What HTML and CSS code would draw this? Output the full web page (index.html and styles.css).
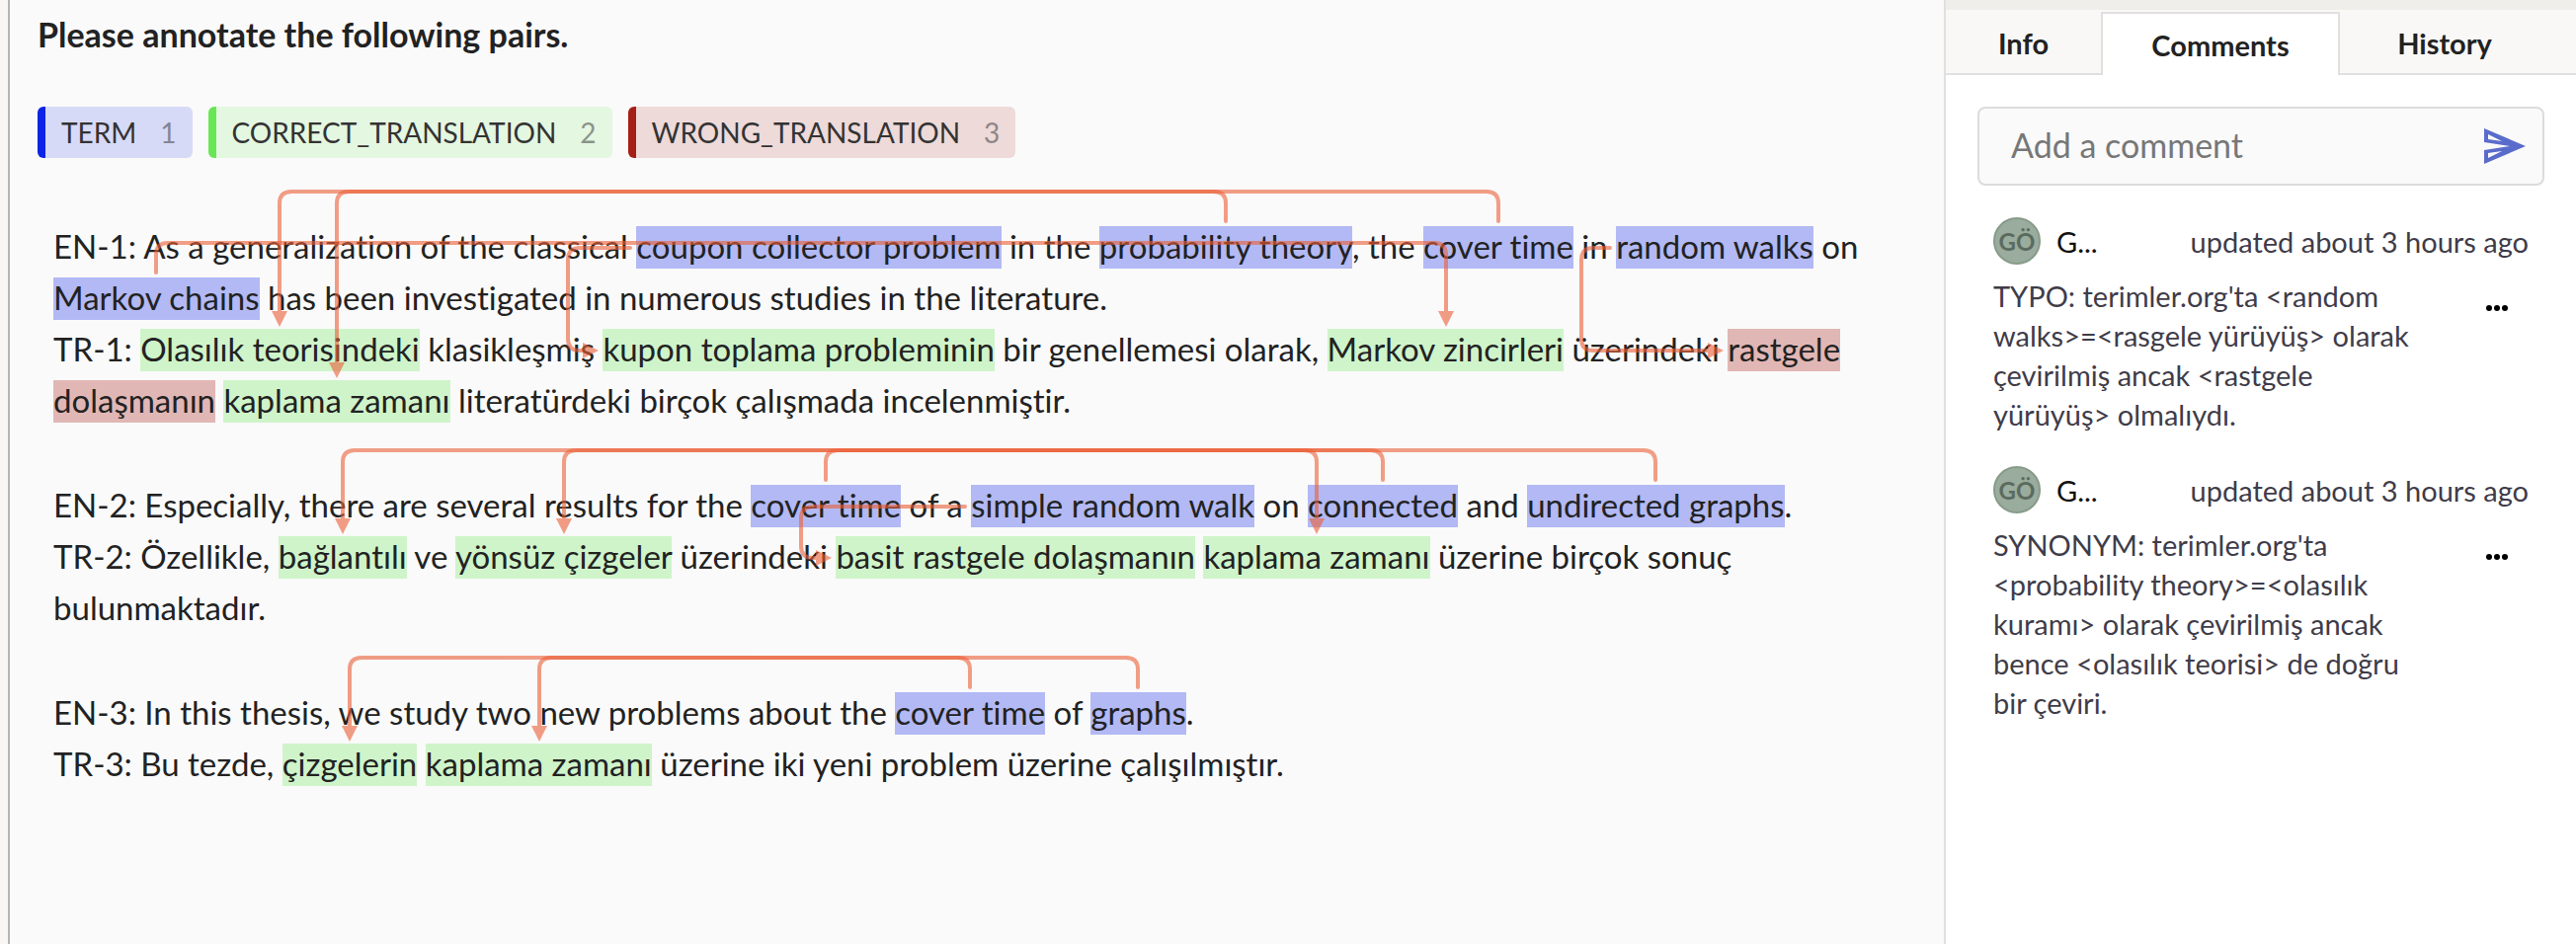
FILE: index.html
```
<!DOCTYPE html>
<html lang="en">
<head>
<meta charset="utf-8">
<title>Annotation</title>
<link rel="stylesheet" href="styles.css">
</head>
<body>
<div class="app">
  <main class="main">
    <h1 class="title">Please annotate the following pairs.</h1>
    <div class="labels">
      <button type="button" class="label label-term">TERM <span class="key">1</span></button>
      <button type="button" class="label label-correct">CORRECT_TRANSLATION <span class="key">2</span></button>
      <button type="button" class="label label-wrong">WRONG_TRANSLATION <span class="key">3</span></button>
    </div>
    <div class="text" id="text">
      <div class="pair">
        <p>EN-1: As a generalization of the classical <mark class="term" id="t1">coupon collector problem</mark> in the <mark class="term" id="t2">probability theory</mark>, the <mark class="term" id="t3">cover time</mark> in <mark class="term" id="t4">random walks</mark> on <mark class="term" id="t5">Markov chains</mark> has been investigated in numerous studies in the literature.</p>
        <p lang="tr">TR-1: <mark class="correct" id="c1">Olasılık teorisindeki</mark> klasikleşmiş <mark class="correct" id="c2">kupon toplama probleminin</mark> bir genellemesi olarak, <mark class="correct" id="c3">Markov zincirleri</mark> üzerindeki <mark class="wrong" id="w1">rastgele dolaşmanın</mark> <mark class="correct" id="c4">kaplama zamanı</mark> literatürdeki birçok çalışmada incelenmiştir.</p>
      </div>
      <div class="pair">
        <p>EN-2: Especially, there are several results for the <mark class="term" id="t6">cover time</mark> of a <mark class="term" id="t7">simple random walk</mark> on <mark class="term" id="t8">connected</mark> and <mark class="term" id="t9">undirected graphs</mark>.</p>
        <p lang="tr">TR-2: Özellikle, <mark class="correct" id="c5">bağlantılı</mark> ve <mark class="correct" id="c6">yönsüz çizgeler</mark> üzerindeki <mark class="correct" id="c7">basit rastgele dolaşmanın</mark> <mark class="correct" id="c8">kaplama zamanı</mark> üzerine birçok sonuç bulunmaktadır.</p>
      </div>
      <div class="pair">
        <p>EN-3: In this thesis, we study two new problems about the <mark class="term" id="t10">cover time</mark> of <mark class="term" id="t11">graphs</mark>.</p>
        <p lang="tr">TR-3: Bu tezde, <mark class="correct" id="c9">çizgelerin</mark> <mark class="correct" id="c10">kaplama zamanı</mark> üzerine iki yeni problem üzerine çalışılmıştır.</p>
      </div>
      <svg class="relations" id="relations" aria-hidden="true"></svg>
    </div>
  </main>
  <aside class="side">
    <nav class="tabs">
      <button type="button" class="tab">Info</button>
      <button type="button" class="tab active">Comments</button>
      <button type="button" class="tab">History</button>
    </nav>
    <div class="panel">
      <form class="composer">
        <input type="text" class="field" aria-label="Add a comment" placeholder="Add a comment">
        <button type="button" class="send" aria-label="Send">
          <svg width="42" height="36" viewBox="0 0 42 36"><path fill="#5a6ccb" fill-rule="evenodd" d="M0 0 42 18 0 36V22L26 18 0 14ZM4 6V11L18 13ZM4 30V25L18 23Z"/></svg>
        </button>
      </form>
      <article class="comment">
        <header class="head">
          <span class="avatar">GÖ</span>
          <span class="name">G...</span>
          <time class="when">updated about 3 hours ago</time>
        </header>
        <div class="body">
          <p class="message" lang="tr">TYPO: terimler.org'ta &lt;random walks&gt;=&lt;rasgele yürüyüş&gt; olarak çevirilmiş ancak &lt;rastgele yürüyüş&gt; olmalıydı.</p>
          <button type="button" class="more" aria-label="More"><svg width="24" height="8" viewBox="0 0 24 8"><circle cx="4" cy="4" r="3"/><circle cx="12" cy="4" r="3"/><circle cx="20" cy="4" r="3"/></svg></button>
        </div>
      </article>
      <article class="comment">
        <header class="head">
          <span class="avatar">GÖ</span>
          <span class="name">G...</span>
          <time class="when">updated about 3 hours ago</time>
        </header>
        <div class="body">
          <p class="message" lang="tr">SYNONYM: terimler.org'ta &lt;probability theory&gt;=&lt;olasılık kuramı&gt; olarak çevirilmiş ancak bence &lt;olasılık teorisi&gt; de doğru bir çeviri.</p>
          <button type="button" class="more" aria-label="More"><svg width="24" height="8" viewBox="0 0 24 8"><circle cx="4" cy="4" r="3"/><circle cx="12" cy="4" r="3"/><circle cx="20" cy="4" r="3"/></svg></button>
        </div>
      </article>
    </div>
  </aside>
</div>
<script src="relations.js"></script>
</body>
</html>
```
FILE: styles.css
```
* { box-sizing: border-box; }
body { margin: 0; font-family: Lato, "Open Sans", sans-serif; font-variant-ligatures: none; color: #222; background: #f8f7f5; }
p, h1 { margin: 0; }
button { font: inherit; font-variant-ligatures: none; border: 0; background: none; padding: 0; cursor: pointer; }

.app { display: flex; min-height: 100vh; padding-left: 8px; }
.main { flex: 1; min-width: 0; padding: 15px 28px 40px; background: #fafafa; border-left: 2px solid #b5b5b5; }
.title { font-size: 34px; line-height: 40px; font-weight: 700; color: #222; }

.labels { display: flex; flex-wrap: wrap; gap: 16px; margin-top: 53px; }
.label { display: flex; align-items: center; gap: 24px; height: 52px; padding: 0 16px; border-left: 8px solid; border-radius: 6px; font-size: 28px; color: #333; }
.label .key { color: #333; opacity: 0.5; }
.label-term { background: #d7daf7; border-color: #0b24e6; }
.label-correct { background: #e4f7e1; border-color: #69e655; }
.label-wrong { background: #eddad9; border-color: #a61f17; }

.text { position: relative; display: flex; flex-direction: column; gap: 54px; margin-top: 63px; padding: 0 16px; font-size: 33px; line-height: 52px; }
mark { color: inherit; padding: 0 0 3px; }
.term { background: #b2b9f4; }
.correct { background: #cff4ca; }
.wrong { background: #e1b7b5; }
.relations { position: absolute; inset: 0; width: 100%; height: 100%; overflow: visible; pointer-events: none; }
.relation { opacity: 0.6; }
.relation .line { fill: none; stroke: #eb5f37; stroke-width: 4; stroke-linecap: round; }
.relation .tip { fill: #eb5f37; }

.side { width: 640px; background: #fff; border-left: 2px solid #e0e0e0; }
.tabs { display: grid; grid-template-columns: 157px 242px 212px; height: 76px; padding-top: 2px; background: #f9f8f6; border-top: 10px solid #efeeea; border-bottom: 2px solid #e0e0e0; }
.tab { font-size: 29px; font-weight: 700; color: #222; }
.tab.active { margin-bottom: -2px; background: #fff; border: 2px solid #e0e0e0; border-bottom: 0; }

.panel { padding: 32px; }
.composer { display: flex; align-items: center; height: 80px; padding: 0 17px 0 32px; background: #fafafa; border: 2px solid #dcdcdc; border-radius: 8px; }
.field { flex: 1; min-width: 0; padding: 0 0 4px; border: 0; outline: 0; background: none; font: inherit; font-size: 34px; color: #222; }
.field::placeholder { color: #777; opacity: 1; }
.send { display: flex; }

.comment { padding: 0 16px; margin-top: 32px; }
.head { display: flex; align-items: center; height: 48px; font-size: 29px; }
.avatar { display: flex; align-items: center; justify-content: center; width: 48px; height: 48px; margin-right: 16px; border: 2px solid #879b89; border-radius: 50%; background: #9aac9d; color: #5b6b5f; font-size: 24px; font-weight: 700; }
.name { flex: 1; color: #111; }
.when { color: #3f3c49; }
.body { display: flex; justify-content: space-between; align-items: flex-start; margin-top: 12px; padding-right: 20px; }
.message { width: 440px; font-size: 29px; line-height: 40px; color: #3f3c49; }
.more { display: flex; padding-top: 28px; }
```
FILE: relations.js
```
const svg = document.getElementById('relations');
const GAP = 35;
const R = 12;
const HEAD = 16;

// [from, to, side the connector leaves from]
const relations = [
  ['t2', 'c1', 'top'], ['t3', 'c4', 'top'], ['t5', 'c3', 'top'],
  ['t1', 'c2', 'left'], ['t4', 'w1', 'left'],
  ['t8', 'c5', 'top'], ['t9', 'c6', 'top'], ['t6', 'c8', 'top'], ['t7', 'c7', 'left'],
  ['t11', 'c9', 'top'], ['t10', 'c10', 'top']
];

function box(id) {
  const origin = svg.getBoundingClientRect();
  const r = document.getElementById(id).getClientRects()[0];
  const x = Math.round(r.left - origin.left);
  const y = Math.round(r.top - origin.top);
  return { x, y, cx: Math.round(x + r.width / 2), cy: Math.round(y + r.height / 2) };
}

function draw() {
  svg.innerHTML = relations.map(([from, to, side]) => {
    const a = box(from);
    const b = box(to);
    let line, tip;
    if (side === 'top') {
      const y = Math.min(a.y, b.y) - GAP;
      const d = b.cx < a.cx ? -1 : 1;
      const end = b.y - 2;
      line = `M${a.cx} ${a.y - 5}V${y + R}q0 ${-R} ${d * R} ${-R}H${b.cx - d * R}q${d * R} 0 ${d * R} ${R}V${end - HEAD}`;
      tip = `M${b.cx - 8} ${end - HEAD}h16L${b.cx} ${end}z`;
    } else {
      const x = Math.min(a.x, b.x) - GAP;
      const end = b.x - 4;
      line = `M${a.x - 6} ${a.cy}H${x + R}q${-R} 0 ${-R} ${R}V${b.cy - R}q0 ${R} ${R} ${R}H${end - HEAD}`;
      tip = `M${end - HEAD} ${b.cy - 8}v16L${end} ${b.cy}z`;
    }
    return `<g class="relation"><path class="line" d="${line}"/><path class="tip" d="${tip}"/></g>`;
  }).join('');
}

draw();
window.addEventListener('resize', draw);
```
